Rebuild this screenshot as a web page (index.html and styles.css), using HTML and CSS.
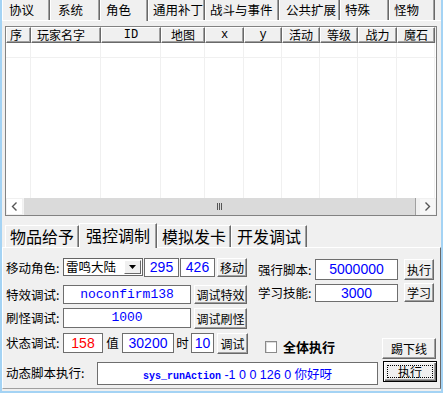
FILE: index.html
```html
<!DOCTYPE html>
<html lang="zh-CN">
<head>
<meta charset="utf-8">
<title>GM</title>
<link rel="stylesheet" href="styles.css">
</head>
<body>
<div class="win">
  <div class="toptabs">
    <div class="tab t1">协议</div>
    <div class="tab t2">系统</div>
    <div class="tab t3 sel">角色</div>
    <div class="tab t4">通用补丁</div>
    <div class="tab t5">战斗与事件</div>
    <div class="tab t6">公共扩展</div>
    <div class="tab t7">特殊</div>
    <div class="tab t8">怪物</div>
  </div>
  <div class="toppage">
    <div class="list">
      <div class="hdr">
        <div class="hc c1 left">序</div>
        <div class="hc c2 left">玩家名字</div>
        <div class="hc c3 mono">ID</div>
        <div class="hc c4">地图</div>
        <div class="hc c5 mono">x</div>
        <div class="hc c6 mono">y</div>
        <div class="hc c7">活动</div>
        <div class="hc c8">等级</div>
        <div class="hc c9">战力</div>
        <div class="hc c10">魔石</div>
      </div>
      <div class="lbody">
        <div class="grow"><i class="c1"></i><i class="c2"></i><i class="c3"></i><i class="c4"></i><i class="c5"></i><i class="c6"></i><i class="c7"></i><i class="c8"></i><i class="c9"></i><i class="c10"></i></div>
        <div class="gfill"><i class="c1"></i><i class="c2"></i><i class="c3"></i><i class="c4"></i><i class="c5"></i><i class="c6"></i><i class="c7"></i><i class="c8"></i><i class="c9"></i><i class="c10"></i></div>
      </div>
      <div class="hscroll">
        <div class="sbtn"><svg width="7" height="9" viewBox="0 0 7 9"><path d="M5.5 0.5 L1.5 4.5 L5.5 8.5" fill="none" stroke="#555" stroke-width="1.4"/></svg></div>
        <div class="thumb"><span class="grip"></span></div>
        <div class="sbtn r"><svg width="7" height="9" viewBox="0 0 7 9"><path d="M1.5 0.5 L5.5 4.5 L1.5 8.5" fill="none" stroke="#555" stroke-width="1.4"/></svg></div>
      </div>
    </div>
  </div>
  <div class="lowtabs">
    <div class="ltab l1">物品给予</div>
    <div class="ltab l2 sel">强控调制</div>
    <div class="ltab l3">模拟发卡</div>
    <div class="ltab l4">开发调试</div>
  </div>
  <div class="lowpage">
    <div class="row r1">
      <div class="lft">
        <span class="lbl">移动角色:</span>
        <div class="combo"><span class="ctext">雷鸣大陆</span><span class="ddbtn"><svg width="7" height="4" viewBox="0 0 7 4"><path d="M0 0 H7 L3.5 4 Z" fill="#000"/></svg></span></div>
        <div class="field num w35">295</div>
        <div class="field num w35 g1">426</div>
        <button class="btn bmove">移动</button>
      </div>
      <div class="rgt">
        <span class="lbl rl">强行脚本:</span>
        <div class="field num rf rf1">5000000</div>
        <button class="btn rb rb1">执行</button>
      </div>
    </div>
    <div class="row r2">
      <div class="lft">
        <span class="lbl">特效调试:</span>
        <div class="field mono wide f2">noconfirm138</div>
        <button class="btn bwide b2">调试特效</button>
      </div>
      <div class="rgt">
        <span class="lbl rl">学习技能:</span>
        <div class="field num rf rf2">3000</div>
        <button class="btn rb rb2">学习</button>
      </div>
    </div>
    <div class="row r3">
      <div class="lft">
        <span class="lbl">刷怪调试:</span>
        <div class="field mono wide f3">1000</div>
        <button class="btn bwide b3">调试刷怪</button>
      </div>
    </div>
    <div class="row r4">
      <div class="lft">
        <span class="lbl">状态调试:</span>
        <div class="field num red w40">158</div>
        <span class="unit u1">值</span>
        <div class="field num w52">30200</div>
        <span class="unit u2">时</span>
        <div class="field num w23">10</div>
        <button class="btn b4">调试</button>
      </div>
      <div class="chk"><span class="box"></span><span class="chklbl">全体执行</span></div>
      <button class="btn kick">踢下线</button>
    </div>
    <div class="row r5">
      <span class="lbl l5">动态脚本执行:</span>
      <div class="field script"><span class="sm">sys_runAction</span><span class="ss"> -1 0 0 126 0 你好呀</span></div>
      <button class="btn focus"><span class="fr">执行</span></button>
    </div>
  </div>
</div>
</body>
</html>
```
FILE: styles.css
```css
html, body { margin: 0; padding: 0; background: #fff; }
.win {
  width: 443px; height: 393px; box-sizing: border-box;
  background: #f0f0f0;
  border-left: 2px solid #a4d3f4; border-right: 2px solid #a4d3f4; border-bottom: 2px solid #a4d3f4;
  font-family: "Noto Sans CJK SC", sans-serif; font-size: 12.5px; color: #000;
  display: flex; flex-direction: column; overflow: hidden;
}
/* top tabs */
.toptabs { display: flex; height: 20px; flex: none; }
.tab {
  box-sizing: border-box; height: 20px; line-height: 19px; padding-left: 5px;
  border-left: 1px solid #fff; border-right: 1px solid #696969;
  box-shadow: inset -1px 0 #a0a0a0; white-space: nowrap; overflow: hidden;
  font-size: 12.5px;
}
.tab.sel { height: 21px; background: #f0f0f0; position: relative; z-index: 1; }
.t1 { width: 48px; padding-left: 6px; }
.t2 { width: 50px; padding-left: 7px; }
.t3 { width: 48px; }
.t4 { width: 57px; padding-left: 4px; }
.t5 { width: 74px; padding-left: 4px; }
.t6 { width: 61px; padding-left: 6px; }
.t7 { width: 49px; padding-left: 4px; }
.t8 { width: 46px; padding-left: 4px; }
.toppage {
  height: 202px; flex: none; box-sizing: border-box;
  border-top: 1px solid #fff; padding: 5px 0 0 3px;
}
.list {
  width: 432px; height: 190px; box-sizing: border-box;
  border: 1px solid #828282; background: #fff;
  display: flex; flex-direction: column;
}
.hdr { display: flex; height: 16px; flex: none; background: #f0f0f0; }
.hc {
  box-sizing: border-box; height: 16px; line-height: 14px; font-size: 12px;
  border-top: 1px solid #fff; border-left: 1px solid #fff;
  border-right: 1px solid #696969; border-bottom: 1px solid #696969;
  box-shadow: inset -1px -1px #a0a0a0; text-align: center; white-space: nowrap; overflow: hidden;
}
.hc.left { text-align: left; padding-left: 3px; }
.hc.c2 { padding-left: 5px; }
.hc.mono { font-family: "Liberation Mono", monospace; font-size: 12px; }
.c1 { width: 25px; } .c2 { width: 70px; } .c3 { width: 60px; } .c4 { width: 44px; }
.c5 { width: 39px; } .c6 { width: 38px; } .c7 { width: 38px; } .c8 { width: 38px; }
.c9 { width: 39px; } .c10 { width: 38px; }
.lbody { flex: 1; display: flex; flex-direction: column; }
.grow, .gfill { display: flex; }
.grow { height: 14px; border-bottom: 1px solid #f0f0f0; flex: none; }
.gfill { flex: 1; }
.grow i, .gfill i { display: block; box-sizing: border-box; border-right: 1px solid #f0f0f0; }
.hscroll { height: 17px; flex: none; display: flex; background: #f0f0f0; }
.sbtn { width: 17px; height: 17px; display: flex; align-items: center; justify-content: center; background: #fff; box-sizing: border-box; border: 1px solid #f0f0f0; }
.sbtn.r { margin-left: 3px; background: #f7f7f7; }
.thumb {
  flex: 1; box-sizing: border-box; background: #dadada;
  border-left: 1px solid #f4f4f4; border-right: 1px solid #a0a0a0;
  display: flex; align-items: center; justify-content: center;
}
.grip { width: 5px; height: 7px; background: repeating-linear-gradient(90deg, #555 0 1px, transparent 1px 2px); }
/* lower tabs */
.lowtabs { display: flex; align-items: flex-end; height: 25px; flex: none; padding-left: 3px; }
.ltab {
  box-sizing: border-box; height: 22px; line-height: 21px; font-size: 16px;
  border-left: 1px solid #fff; border-top: 1px solid #fff; border-right: 1px solid #696969;
  box-shadow: inset -1px 0 #a0a0a0; text-align: center; white-space: nowrap;
}
.ltab.sel { line-height: 22px; position: relative; z-index: 1; margin-bottom: -1px; height: 25px; background: #f0f0f0; }
.l1 { width: 74px; } .l2 { width: 78px; } .l3 { width: 74px; } .l4 { width: 76px; }
.lowpage {
  height: 142px; flex: none; box-sizing: border-box;
  border-top: 1px solid #fff; border-left: 1px solid #fff;
  border-right: 1px solid #696969; border-bottom: 1px solid #a0a0a0;
  padding: 10px 0 0 3px; margin-bottom: 2px;
}
.row { display: flex; align-items: flex-start; }
.lft { display: flex; align-items: flex-start; width: 252px; flex: none; }
.rgt { display: flex; align-items: flex-start; }
.lbl { width: 57px; flex: none; font-size: 12.5px; line-height: 19px; white-space: nowrap; }
.r1 { height: 22px; }
.r2 { height: 21px; margin-top: 3px; }
.r3 { height: 21px; margin-top: 4px; }
.r4 { height: 26px; margin-top: 4px; }
.r5 { height: 24px; margin-top: 2px; }
.field {
  box-sizing: border-box; background: #fff; border: 1px solid #6e6e6e;
  height: 19px; line-height: 17px; text-align: center; color: #0000ff; white-space: nowrap; overflow: hidden;
}
.num { font-family: "Liberation Sans", Arial, sans-serif; font-size: 14px; }
.mono { font-family: "Liberation Mono", monospace; font-size: 13px; }
.red { color: #ff0000; }
.combo {
  box-sizing: border-box; width: 80px; height: 18px; background: #fff;
  border: 1px solid #646464; display: flex; align-items: center; justify-content: space-between;
  margin-right: 1px;
}
.ctext { font-size: 12.5px; line-height: 16px; padding-left: 2px; }
.ddbtn {
  box-sizing: border-box; width: 17px; height: 14px; margin-right: 1px;
  background: #f0f0f0; border-top: 1px solid #fff; border-left: 1px solid #fff;
  border-right: 1px solid #696969; border-bottom: 1px solid #696969;
  display: flex; align-items: center; justify-content: center;
}
.w35 { width: 35px; }
.g1 { margin-left: 1px; }
.btn {
  box-sizing: border-box; margin: 0; padding: 0; font-family: inherit; font-size: 12px; color: #000;
  background: #f0f0f0; height: 19px; line-height: 16px;
  border-top: 1px solid #fff; border-left: 1px solid #fff;
  border-right: 1px solid #696969; border-bottom: 1px solid #696969;
  box-shadow: inset -1px -1px #a0a0a0; white-space: nowrap;
}
.bmove { width: 30px; margin-left: 2px; }
.rl { width: 57px; margin-top: 1px; line-height: 21px; }
.rf { width: 83px; }
.rf1 { height: 21px; line-height: 19px; margin-top: 1px; }
.rf2 { height: 18px; line-height: 16px; margin-top: 1px; }
.rb { width: 30px; margin-left: 6px; }
.rb1 { height: 21px; margin-top: 1px; }
.rb2 { height: 19px; }
.r2 .rl { line-height: 19px; margin-top: 0; }
.wide { width: 128px; }
.f2 { height: 19px; margin-top: 2px; }
.bwide { width: 53px; margin-left: 3px; }
.b2 { margin-top: 2px; }
.r2 .lft .lbl { margin-top: 2px; }
.f3 { height: 20px; line-height: 18px; }
.b3 { height: 21px; }
.r3 .lbl { line-height: 20px; }
.r4 .lft .lbl { line-height: 20px; }
.r4 .field { height: 20px; line-height: 18px; }
.w40 { width: 40px; }
.w52 { width: 52px; }
.w23 { width: 23px; }
.unit { font-size: 12.5px; line-height: 20px; text-align: center; flex: none; }
.u1 { width: 19px; }
.u2 { width: 17px; }
.b4 { width: 31px; height: 21px; margin-left: 3px; }
.chk { display: flex; align-items: center; margin-left: 7px; margin-top: 7px; }
.box { width: 12px; height: 12px; box-sizing: border-box; background: #fff; border: 1px solid #8a8a8a; box-shadow: inset 1px 1px #dcdcdc; }
.chklbl { font-weight: bold; font-size: 13px; margin-left: 6px; line-height: 13px; }
.kick { width: 54px; height: 21px; margin-left: auto; margin-right: 4px; margin-top: 5px; }
.l5 { width: 91px; line-height: 22px; margin-top: 1px; }
.script { width: 281px; height: 23px; line-height: 21px; margin-top: 1px; }
.sm { font-family: "Liberation Mono", monospace; font-size: 10px; font-weight: bold; }
.ss { font-family: "Liberation Sans", "Noto Sans CJK SC", sans-serif; font-size: 12.5px; }
.focus {
  width: 54px; height: 21px; margin-left: 5px;
  border: 1px solid #000; box-shadow: inset 1px 1px #fff, inset -1px -1px #696969, inset -2px -2px #a0a0a0;
  display: flex; align-items: center; justify-content: center; padding: 3px;
}
.fr { display: block; width: 100%; height: 100%; box-sizing: border-box; border: 1px dotted #000; line-height: 11px; }
```
